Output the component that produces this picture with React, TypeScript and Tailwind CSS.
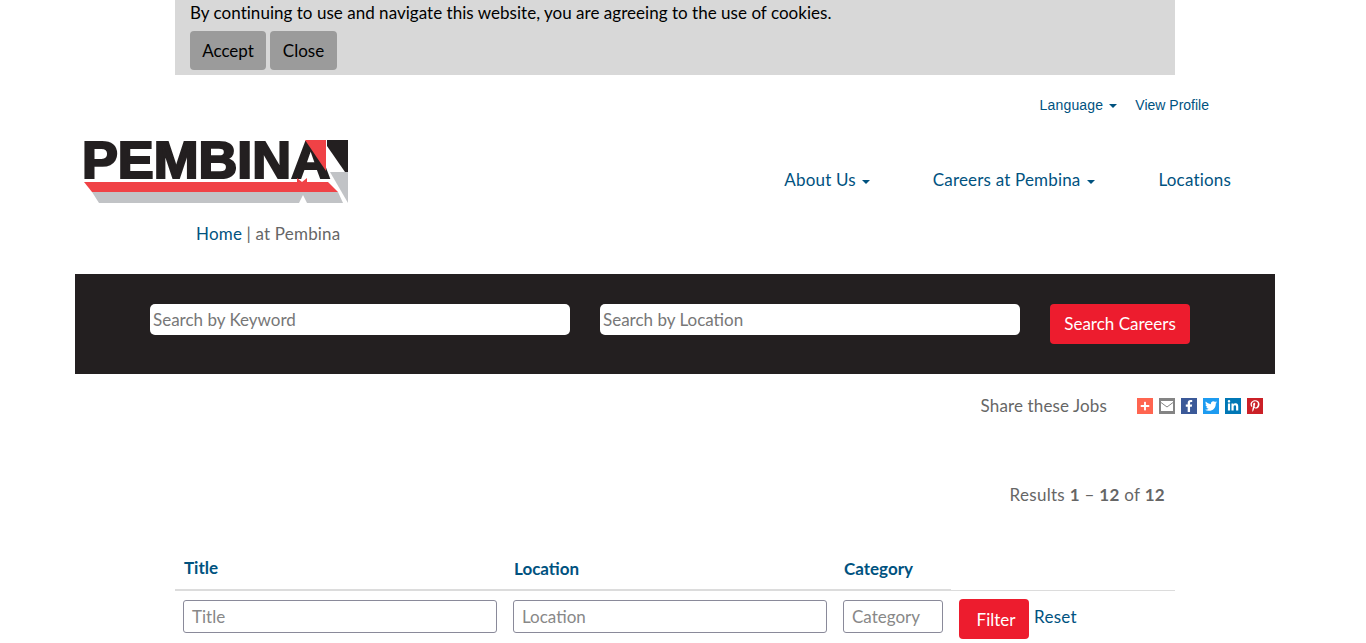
import { FaFacebookF, FaLinkedinIn, FaPinterestP, FaPlus, FaTwitter } from 'react-icons/fa';

const body = "font-['Lato','Noto_Sans',sans-serif]";

function Caret() {
  return <span className="ml-[6px] inline-block h-0 w-0 border-x-[4px] border-t-[4px] border-x-transparent border-t-current align-middle" />;
}

function Logo() {
  return (
    <svg width="266" height="65" viewBox="0 0 266 65" className="overflow-visible" aria-label="Pembina">
      <polygon points="243,0 264,0 264,32 261,32 243,6" fill="#231f20" />
      <text x="-2" y="38" fontFamily="'Liberation Sans',sans-serif" fontWeight="700" fontSize="51" textLength="248" lengthAdjust="spacingAndGlyphs" fill="#231f20" stroke="#231f20" strokeWidth="2.2">PEMBINA</text>
      <polygon points="221,0 242,0 242,31" fill="#f04246" />
      <polygon points="0,42 244,42 254,52 8,52" fill="#f04246" />
      <polygon points="8,52 254,52 259,63 15,63" fill="#c1c3c6" />
      <polygon points="246,32 264,32 264,63" fill="#c1c3c6" />
      <polygon points="213,38 218,42 223,38 223,42 213,42" fill="#f04246" />
      <polygon points="215,63 219,55 223,63" fill="#ffffff" />
    </svg>
  );
}

const shareIcons = [
  { bg: 'bg-[#ff6550]', icon: <FaPlus size={10} /> },
  {
    bg: 'bg-[#848484]',
    icon: (
      <svg width="12" height="10" viewBox="0 0 12 10">
        <rect width="12" height="10" fill="#ffffff" />
        <path d="M0 1.5 L6 6 L12 1.5" fill="none" stroke="#848484" strokeWidth="1" />
      </svg>
    ),
  },
  { bg: 'bg-[#3b5998]', icon: <FaFacebookF size={12} /> },
  { bg: 'bg-[#1d9bf0]', icon: <FaTwitter size={12} /> },
  { bg: 'bg-[#0077b5]', icon: <FaLinkedinIn size={12} /> },
  { bg: 'bg-[#cb2027]', icon: <FaPinterestP size={12} /> },
];

export default function App() {
  return (
    <div className={`h-[643px] w-[1350px] overflow-hidden bg-white ${body} text-[17px] text-[#666666]`}>
      <div className="mx-auto h-[75px] w-[1000px] bg-[#d8d8d8] pl-[15px] text-black">
        <p className="h-[31px] leading-[25px] tracking-[0.03px]">By continuing to use and navigate this website, you are agreeing to the use of cookies.</p>
        <div className="flex gap-[4px]">
          <button className="h-[39px] w-[76px] rounded-[4px] bg-[#9b9b9b]">Accept</button>
          <button className="h-[39px] w-[67px] rounded-[4px] bg-[#9b9b9b]">Close</button>
        </div>
      </div>

      <div className="mx-auto w-[1200px]">
        <div className="flex h-[59px] items-center justify-end pr-[66px] pt-[2px] font-['Liberation_Sans',sans-serif] text-[14px] text-[#00527f]">
          <span className="mr-[18px] tracking-[0.2px]">Language<Caret /></span>
          <span>View Profile</span>
        </div>

        <div className="relative h-[140px]">
          <div className="flex items-start justify-between">
            <div className="pl-[9px] pt-[6px]"><Logo /></div>
            <nav className="flex items-center pr-[44px] pt-[33px] tracking-[0.18px] text-[#00527f]">
              <span className="mr-[63px]">About Us<Caret /></span>
              <span className="mr-[64px]">Careers at Pembina<Caret /></span>
              <span>Locations</span>
            </nav>
          </div>
          <p className="pl-[121px] pt-[17px] leading-[24px] tracking-[0.18px]"><span className="text-[#00527f]">Home</span> | at Pembina</p>
        </div>

        <div className="flex h-[100px] gap-[30px] bg-[#231f20] pl-[75px] pt-[30px]">
          <div className="h-[31px] w-[420px] rounded-[5px] bg-white pl-[3px] leading-[31px] text-[#777777]">Search by Keyword</div>
          <div className="h-[31px] w-[420px] rounded-[5px] bg-white pl-[3px] leading-[31px] text-[#777777]">Search by Location</div>
          <button className="h-[40px] w-[140px] rounded-[4px] bg-[#ed1c2e] text-white">Search Careers</button>
        </div>

        <div className="flex h-[64px] items-center justify-end pr-[12px]">
          <span className="mr-[30px] tracking-[0.13px]">Share these Jobs</span>
          <div className="flex gap-[6px]">
            {shareIcons.map((item, index) => (
              <span key={index} className={`flex h-[16px] w-[16px] items-center justify-center text-white ${item.bg}`}>{item.icon}</span>
            ))}
          </div>
        </div>

        <p className="mt-[44px] pr-[110px] text-right leading-[26px] tracking-[0.3px]">Results <b>1</b> – <b>12</b> of <b>12</b></p>

        <div className="ml-[100px] mt-[44px] w-[1000px]">
          <div className="relative flex h-[39px] items-start border-b border-[#dcdcdc] pt-[3px] font-bold text-[#00527f]">
            <span className="ml-[9px] w-[330px]">Title</span>
            <span className="w-[330px] pt-[1px]">Location</span>
            <span className="pt-[1px]">Category</span>
            <span className="absolute bottom-[-1px] left-0 h-[2px] w-[776px] bg-[#dcdcdc]" />
          </div>
          <div className="flex items-start pl-[8px] pt-[8px]">
            <div className="mr-[16px] mt-[1px] h-[33px] w-[314px] rounded-[3px] border border-[#8a8a9a] pl-[8px] leading-[31px] text-[#888888]">Title</div>
            <div className="mr-[16px] mt-[1px] h-[33px] w-[314px] rounded-[3px] border border-[#8a8a9a] pl-[8px] leading-[31px] text-[#888888]">Location</div>
            <div className="mr-[16px] mt-[1px] h-[33px] w-[100px] rounded-[3px] border border-[#8a8a9a] pl-[8px] leading-[31px] text-[#888888]">Category</div>
            <button className="h-[40px] w-[70px] rounded-[4px] bg-[#ed1c2e] pl-[4px] pt-[1px] text-white">Filter</button>
            <span className="ml-[5px] mt-[5px] tracking-[0.3px] text-[#00527f]">Reset</span>
          </div>
        </div>
      </div>
    </div>
  );
}
